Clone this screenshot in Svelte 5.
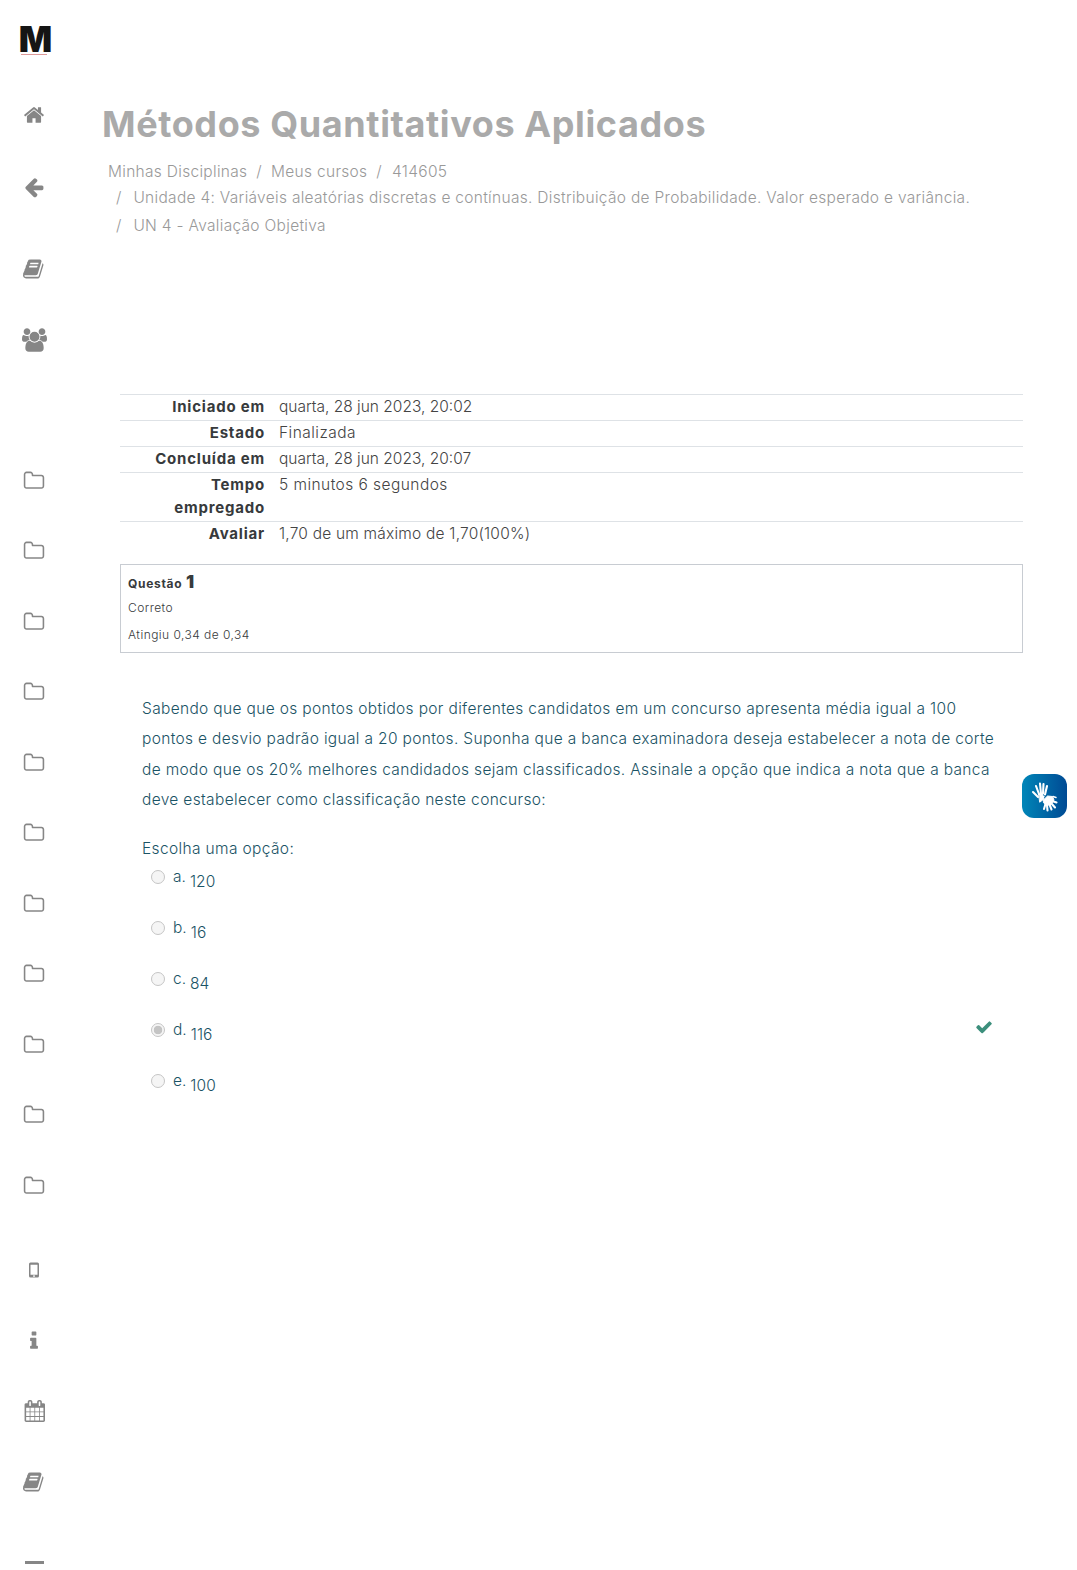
<script>
  const folders = Array.from({ length: 11 });
  const meta = [
    ['Iniciado em', 'quarta, 28 jun 2023, 20:02', 0],
    ['Estado', 'Finalizada', 0.47],
    ['Concluída em', 'quarta, 28 jun 2023, 20:07', 0],
    ['Tempo\nempregado', '5 minutos 6 segundos', 0.45],
    ['Avaliar', '1,70 de um máximo de 1,70(100%)', 0.21]
  ];
  const options = [
    { l: 'a.', v: '120' },
    { l: 'b.', v: '16' },
    { l: 'c.', v: '84' },
    { l: 'd.', v: '116', checked: true },
    { l: 'e.', v: '100' }
  ];
  const book = 'M1639 478q40 57 18 129l-275 906q-19 64-76.500 107.500t-122.500 43.500h-923q-77 0-148.500-53.500t-99.500-131.500q-24-67-2-127 0-4 3-27t4-37q1-8-3-21.500t-3-19.500q2-11 8-21t16.500-23.500 16.500-23.500q23-38 45-91.500t30-91.500q3-10 .5-30t-.5-28q3-11 17-28t17-23q21-36 42-92t25-90q1-9-2.500-32t.5-28q4-13 22-30.500t22-22.500q19-26 42.500-84.500t27.500-96.500q1-8-3-25.500t-2-26.500q2-8 9-18t18-23 17-21q8-12 16.500-30.500t15-35 16-36 19.500-32 26.500-23.500 36-11.500 47.500 5.500l-1 3q38-9 51-9h761q74 0 114 56t18 130l-274 906q-36 119-71.500 153.500t-128.500 34.500h-869q-27 0-38 15-11 16-1 43 24 70 144 70h923q29 0 56-15.500t35-41.500l300-987q7-22 5-57 38 15 59 43zm-1064 2q-4 13 2 22.500t20 9.500h608q13 0 25.500-9.500t16.500-22.500l21-64q4-13-2-22.500t-20-9.500h-608q-13 0-25.500 9.500t-16.500 22.500zm-83 256q-4 13 2 22.500t20 9.500h608q13 0 25.500-9.500t16.500-22.500l21-64q4-13-2-22.500t-20-9.500h-608q-13 0-25.500 9.500t-16.500 22.500z';
  const folder = 'M1600 1312v-704q0-40-28-68t-68-28h-704q-40 0-68-28t-28-68v-64q0-40-28-68t-68-28h-320q-40 0-68 28t-28 68v960q0 40 28 68t68 28h1216q40 0 68-28t28-68zm128-704v704q0 92-66 158t-158 66h-1216q-92 0-158-66t-66-158v-960q0-92 66-158t158-66h320q92 0 158 66t66 158v32h672q92 0 158 66t66 158z';
  const calendar = 'M192 1664h288v-288h-288v288zm352 0h320v-288h-320v288zm-352-352h288v-320h-288v320zm352 0h320v-320h-320v320zm-352-384h288v-288h-288v288zm736 736h320v-288h-320v288zm-384-736h320v-288h-320v288zm768 736h288v-288h-288v288zm-384-352h320v-320h-320v320zm-352-864v-288q0-13-9.500-22.500t-22.500-9.500h-64q-13 0-22.500 9.500t-9.500 22.500v288q0 13 9.500 22.500t22.500 9.500h64q13 0 22.500-9.500t9.500-22.500zm736 864h288v-320h-288v320zm-384-384h320v-288h-320v288zm384 0h288v-288h-288v288zm32-480v-288q0-13-9.500-22.500t-22.500-9.500h-64q-13 0-22.500 9.500t-9.500 22.500v288q0 13 9.500 22.500t22.500 9.500h64q13 0 22.500-9.500t9.500-22.500zm384-64v1280q0 52-38 90t-90 38h-1408q-52 0-90-38t-38-90v-1280q0-52 38-90t90-38h128v-96q0-66 47-113t113-47h64q66 0 113 47t47 113v96h384v-96q0-66 47-113t113-47h64q66 0 113 47t47 113v96h128q52 0 90 38t38 90z';
</script>

<div class="page">
  <aside class="rail">
    <div class="logo"><span class="mark">M</span><span class="rule"></span></div>
    <div class="item home"><svg class="ico" viewBox="0 0 1792 1792"><path d="M1472 992v480q0 26-19 45t-45 19h-384v-384h-256v384h-384q-26 0-45-19t-19-45v-480q0-1 .5-3t.5-3l575-474 575 474q1 2 1 6zm223-69l-62 74q-8 9-21 11h-3q-13 0-21-7l-692-577-692 577q-12 8-24 7-13-2-21-11l-62-74q-8-10-7-23.5t11-21.5l719-599q32-26 76-26t76 26l244 204v-195q0-14 9-23t23-9h192q14 0 23 9t9 23v408l219 182q10 8 11 21.5t-7 23.5z"/></svg></div>
    <div class="item back"><svg class="ico" viewBox="0 0 1792 1792"><path d="M1664 896v128q0 53-32.500 90.500t-84.500 37.500h-704l293 294q38 36 38 90t-38 90l-75 76q-37 37-90 37-52 0-91-37l-651-652q-37-37-37-90 0-52 37-91l651-650q38-38 91-38 52 0 90 38l75 74q38 38 38 91t-38 91l-293 293h704q52 0 84.500 37.500t32.500 90.500z"/></svg></div>
    <div class="item bookrow"><svg class="ico" viewBox="0 0 1792 1792"><path d={book}/></svg></div>
    <div class="item users"><svg class="ico wide" viewBox="0 0 1920 1792"><path d="M593 896q-162 5-265 128h-134q-82 0-138-40.500t-56-118.500q0-353 124-353 6 0 43.500 21t97.500 42.500 119 21.500q67 0 133-23-5 37-5 66 0 139 81 256zm1071 637q0 120-73 189.500t-194 69.500h-874q-121 0-194-69.500t-73-189.500q0-53 3.500-103.500t14-109 26.500-108.500 43-97.500 62-81 85.500-53.500 111.500-20q10 0 43 21.500t73 48 107 48 135 21.500 135-21.500 107-48 73-48 43-21.500q61 0 111.500 20t85.500 53.500 62 81 43 97.500 26.500 108.500 14 109 3.500 103.500zm-1024-1277q0 106-75 181t-181 75-181-75-75-181 75-181 181-75 181 75 75 181zm704 384q0 159-112.500 271.500t-271.500 112.500-271.500-112.500-112.500-271.500 112.500-271.500 271.500-112.500 271.500 112.500 112.500 271.500zm576 225q0 78-56 118.500t-138 40.500h-134q-103-123-265-128 81-117 81-256 0-29-5-66 66 23 133 23 59 0 119-21.500t97.500-42.500 43.500-21q124 0 124 353zm-128-609q0 106-75 181t-181 75-181-75-75-181 75-181 181-75 181 75 75 181z"/></svg></div>
    <div class="folders">
      {#each folders as _}
        <div class="item"><svg class="ico" viewBox="0 0 1792 1792"><path d={folder}/></svg></div>
      {/each}
    </div>
    <div class="item phone"><svg class="ico" viewBox="0 0 22 22"><path fill-rule="evenodd" d="M7.500 3.500h7q1.500 0 1.500 1.500v12q0 1.500-1.500 1.500h-7q-1.500 0-1.500-1.500v-12q0-1.500 1.500-1.500zm0 2.200v10h7v-10zm3.500 10.600a.8 .8 0 1 0 .01 0z"/></svg></div>
    <div class="item"><svg class="ico" viewBox="0 0 1792 1792"><path d="M1216 1344v128q0 26-19 45t-45 19h-512q-26 0-45-19t-19-45v-128q0-26 19-45t45-19h64v-384h-64q-26 0-45-19t-19-45v-128q0-26 19-45t45-19h384q26 0 45 19t19 45v576h64q26 0 45 19t19 45zm-128-1152v192q0 26-19 45t-45 19h-256q-26 0-45-19t-19-45v-192q0-26 19-45t45-19h256q26 0 45 19t19 45z"/></svg></div>
    <div class="item"><svg class="ico" viewBox="0 0 1664 1792"><path d={calendar}/></svg></div>
    <div class="item"><svg class="ico" viewBox="0 0 1792 1792"><path d={book}/></svg></div>
    <div class="dash"></div>
  </aside>

  <main class="main">
    <h1>Métodos Quantitativos Aplicados</h1>
    <nav class="crumbs">
      <div class="crumb-line first"><a>Minhas Disciplinas</a><i>/</i><a>Meus cursos</a><i class="wider">/</i><a>414605</a></div>
      <div class="crumb-line"><i>/</i><a>Unidade 4: Variáveis aleatórias discretas e contínuas. Distribuição de Probabilidade. Valor esperado e variância.</a></div>
      <div class="crumb-line last"><i>/</i><a>UN 4 - Avaliação Objetiva</a></div>
    </nav>

    <section class="content">
      <table>
        <tbody>
          {#each meta as [k, v, s]}
            <tr><th>{k}</th><td style="letter-spacing:{s}px">{v}</td></tr>
          {/each}
        </tbody>
      </table>

      <div class="qinfo">
        <div class="qno">Questão <b>1</b></div>
        <div class="qline">Correto</div>
        <div class="qline">Atingiu 0,34 de 0,34</div>
      </div>

      <div class="qtext">
        <p>Sabendo que que os pontos obtidos por diferentes candidatos em um concurso apresenta média igual a 100 pontos e desvio padrão igual a 20 pontos. Suponha que a banca examinadora deseja estabelecer a nota de corte de modo que os 20% melhores candidados sejam classificados. Assinale a opção que indica a nota que a banca deve estabelecer como classificação neste concurso:</p>
        <div class="prompt">Escolha uma opção:</div>
        <div class="opts">
          {#each options as o}
            <div class="opt">
              <span class="radio" class:on={o.checked}></span>
              <span class="let">{o.l}</span>
              <span class="val">{o.v}</span>
              {#if o.checked}
                <svg class="check" viewBox="0 0 1792 1792"><path d="M1671 566q0 40-28 68l-724 724-136 136q-28 28-68 28t-68-28l-136-136-362-362q-28-28-28-68t28-68l136-136q28-28 68-28t68 28l294 295 656-657q28-28 68-28t68 28l136 136q28 28 28 68z"/></svg>
              {/if}
            </div>
          {/each}
        </div>
      </div>
    </section>
  </main>

  <div class="vlibras">
    <svg viewBox="0 0 45 44" width="45" height="44">
      <g fill="none" stroke="#fff" stroke-linecap="round">
        <g stroke-width="2.100">
          <path d="M14 12l3 8M18 9.500l1 10M21.500 10l-.5 9.500M25 12l-2 8.500M11 18l5 5"/>
        </g>
        <path d="M17 20l3.500 0 1.500 5-4 3z" fill="#fff" stroke="#fff" stroke-width="1"/>
        <g stroke-width="2.100">
          <path d="M30 27l4.500 1.500M29.500 29.500l3.500 4M27.500 30.500l2 5M25 31l.5 5.500M23.500 30l-1.500 5"/>
        </g>
        <path d="M22 25.500l3.500-3.500 5 .5 1.500 3.500-3 4.500-5 1-2.500-3z" fill="#fff" stroke="#fff" stroke-width="1"/>
        <path d="M19 24l3-1.500M31 22.500l3 1" stroke-width="1.400"/>
      </g>
    </svg>
  </div>
</div>

<style>
  :global(body) { margin: 0; background: #fff; }
  .page {
    display: flex;
    height: 1570px;
    width: 1077px;
    overflow: hidden;
    position: relative;
    font-family: Inter, "Noto Sans", sans-serif;
    font-weight: 300;
    color: #555;
  }
  .rail {
    width: 69px;
    flex: none;
    display: flex;
    flex-direction: column;
    align-items: center;
    padding: 27px 0.500px 0 0;
    box-sizing: border-box;
    fill: #868686;
  }
  .logo { width: 32px; height: 53px; flex: none; display: flex; flex-direction: column; align-items: center; }
  .mark {
    font: 900 35px/25px Inter, sans-serif;
    color: #151515;
    height: 25px;
    margin-left: 2.500px;
  }
  .rule { width: 26px; height: 1px; margin-top: 2px; background: #d99; }
  .item { height: 70.4px; display: flex; align-items: center; justify-content: center; flex: none; }
  .back { margin-top: 1px; }
  .bookrow { margin-top: 12.100px; }
  .users { position: relative; top: 1px; }
  .folders { margin-top: 70.700px; display: flex; flex-direction: column; flex: none; }
  .folders .item { height: 70.500px; }
  .phone { margin-top: 14.400px; }
  .ico { width: 22px; height: 22px; }
  .ico.wide { width: 25px; height: 24px; }
  .dash { width: 19px; height: 3px; background: #868686; margin-top: 44px; flex: none; }

  .main { flex: 1; min-width: 0; padding-top: 100px; box-sizing: border-box; }
  h1 {
    margin: 0 0 0 33px;
    font-size: 36px;
    line-height: 49px;
    font-weight: 700;
    color: #aaa;
    letter-spacing: 0.61px;
  }
  .crumbs { margin: 10px 0 0 39px; font-size: 15.500px; color: #999; letter-spacing: 0.3px; }
  .crumb-line { height: 26px; line-height: 26px; padding-left: 8px; white-space: nowrap; display: flex; }
  .crumb-line.last { height: 30px; line-height: 30px; }
  .crumb-line.first { padding-left: 0; }
  .crumb-line i { font-style: normal; margin: 0 9px; }
  .crumb-line i.wider { margin: 0 10px 0 9px; }
  .crumb-line:not(.first) i { margin: 0 11.700px 0 0; }

  .content { margin: 152.500px 54px 0 51px; }
  table { width: 100%; border-collapse: collapse; font-size: 15.500px; line-height: 23px; }
  tr { border-top: 1px solid #dee2e6; }
  th { width: 145px; box-sizing: border-box; text-align: right; font-size: 15px; font-weight: 700; color: #373a3c; padding: 0 0 2px; vertical-align: top; letter-spacing: 0.8px; white-space: pre-line; }
  td { padding: 0 0 2px 14px; vertical-align: top; color: #444; }

  .qinfo {
    margin-top: 17px;
    height: 89px;
    box-sizing: border-box;
    border: 1px solid #c8ccd2;
    padding: 7px 7px;
    font-size: 12px;
    color: #373a3c;
    letter-spacing: 0.45px;
  }
  .qno { font-weight: 700; line-height: 20px; letter-spacing: 0.7px; }
  .qno b { font-size: 18px; }
  .qline { line-height: 27px; }

  .qtext { padding: 41.500px 20px 0 22px; color: #1a5365; font-size: 15.500px; }
  p { margin: 0; line-height: 30.400px; letter-spacing: 0.34px; }
  .prompt { margin-top: 21.500px; line-height: 23px; letter-spacing: 0.36px; }
  .opt { display: flex; height: 51px; align-items: flex-start; position: relative; }
  .opts { margin-top: 8px; padding-left: 9px; }
  .radio {
    width: 14px; height: 14px; box-sizing: border-box;
    border: 1px solid #c5c5c5; border-radius: 50%;
    background: #f5f5f5; margin: 2px 8px 0 0; flex: none; position: relative;
  }
  .radio.on { background: radial-gradient(circle, #c4c4c4 0 4px, #f5f5f5 4.600px); }
  .let { margin: -1.500px 4px 0 0; line-height: 20px; }
  .val { margin-top: 3.500px; line-height: 20px; letter-spacing: 0.1px; }
  .check { position: absolute; width: 18px; height: 18px; left: 824px; top: -3px; fill: #3c8f7c; }

  .vlibras {
    position: absolute;
    left: 1022px; top: 774px;
    width: 45px; height: 44px;
    border-radius: 12px;
    background: linear-gradient(90deg, #0086b8, #004a94);
  }
  .vlibras svg { display: block; }
</style>
